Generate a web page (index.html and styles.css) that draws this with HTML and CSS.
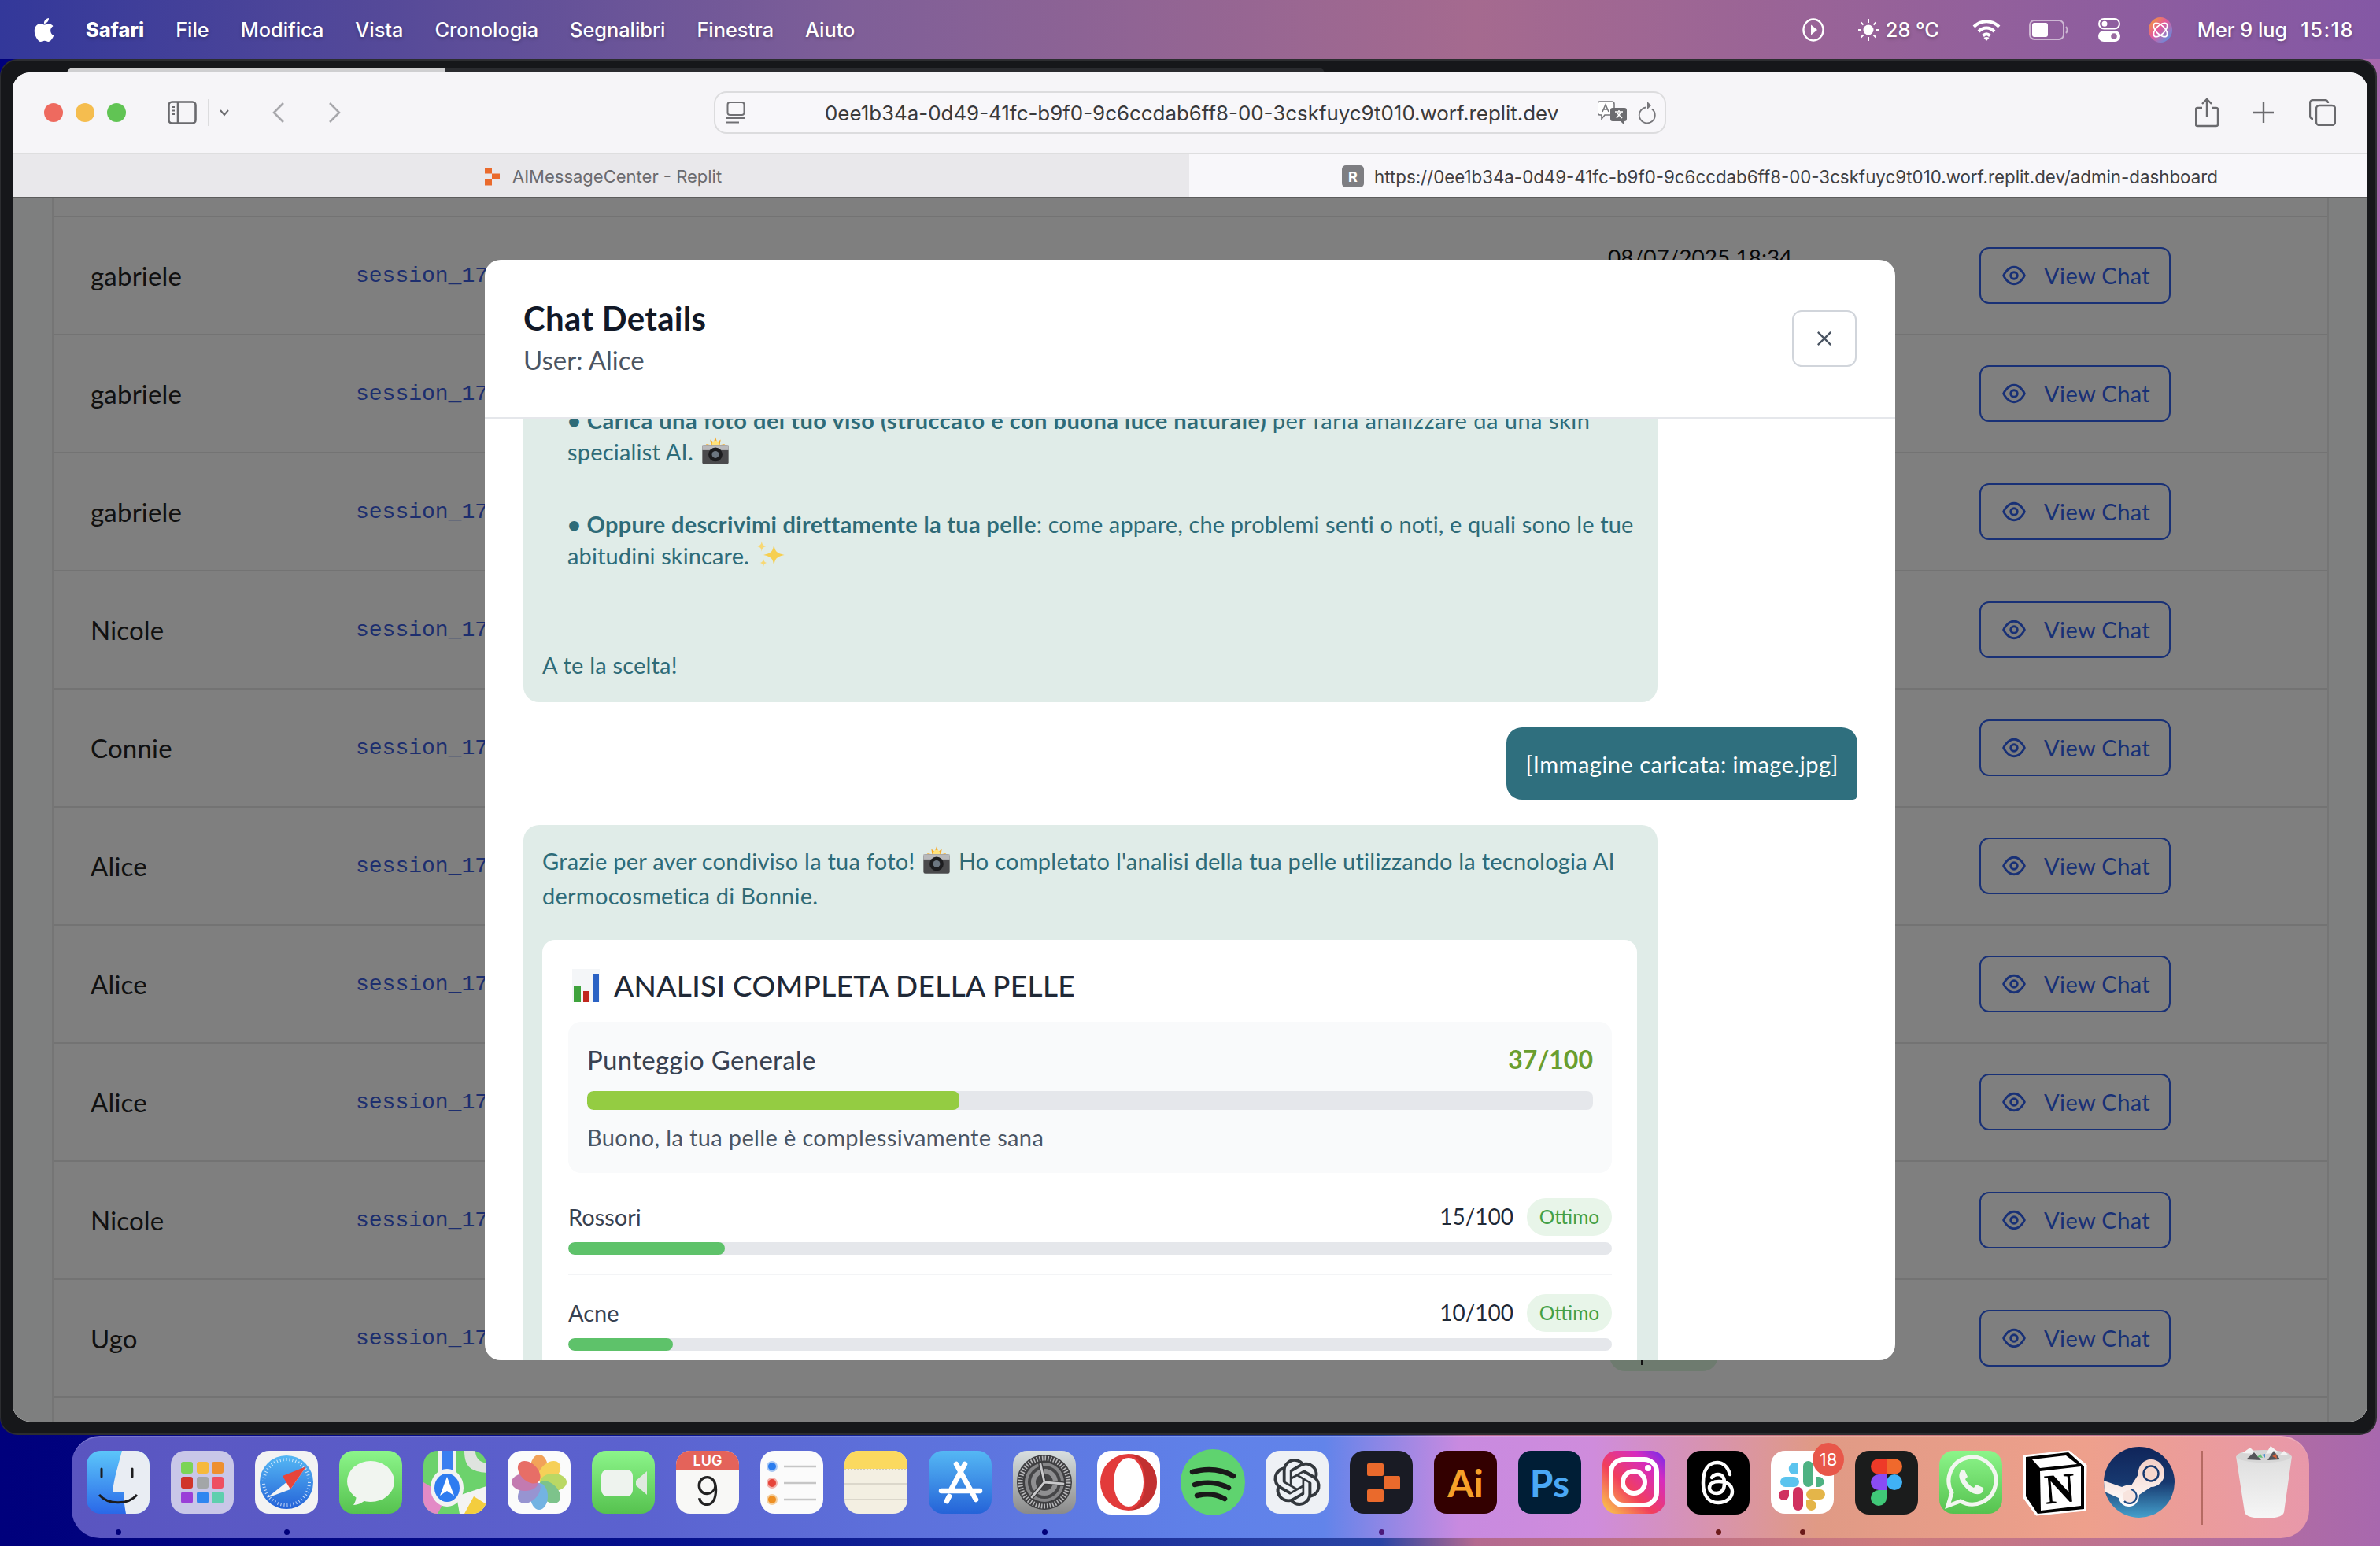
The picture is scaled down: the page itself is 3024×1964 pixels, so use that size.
FILE: index.html
```html
<!DOCTYPE html>
<html lang="it">
<head>
<meta charset="utf-8">
<title>Chat Details</title>
<link rel="stylesheet" href="styles.css">
</head>
<body>
<svg class="sprite" aria-hidden="true">
  <defs>
    <symbol id="replit" viewBox="0 0 24 24"><path d="M3 1h9v7.500H3zM12 8.500h10v7.500H12zM3 16h9v7.500H3z" fill="currentColor"/></symbol>
    <symbol id="eye" viewBox="0 0 24 24"><path d="M2 12s3.500-8 10-8 10 8 10 8-3.500 8-10 8-10-8-10-8Z" fill="none" stroke="currentColor" stroke-width="2.200"/><circle cx="12" cy="12" r="3.200" fill="none" stroke="currentColor" stroke-width="2.200"/></symbol>
    <symbol id="cam" viewBox="0 0 36 32"><path d="M18 0l2 6 4-3-1 6 6-1-4 4h-14l-4-4 6 1-1-6 4 3z" fill="#f6a623"/><circle cx="18" cy="8" r="4" fill="#ffe27a"/><rect x="3" y="9" width="30" height="22" rx="2" fill="#4a4a4c"/><rect x="3" y="9" width="30" height="6" fill="#b9b9bb"/><circle cx="18" cy="20" r="8" fill="#1d1d1f"/><circle cx="18" cy="20" r="4" fill="#6c7680"/></symbol>
    <symbol id="spark" viewBox="0 0 36 32"><path d="M21 3c1 9 3 11 12 13-9 2-11 4-12 13-1-9-3-11-12-13 9-2 11-4 12-13z" fill="#f6cf50"/><path d="M7 0c.5 4 1.500 5 5 6-3.500 1-4.500 2-5 6-.5-4-1.500-5-5-6 3.500-1 4.500-2 5-6zM9 20c.4 3 1 4 4 5-3 .8-3.600 2-4 5-.4-3-1-4.200-4-5 3-1 3.600-2 4-5z" fill="#f8d873"/></symbol>
    <symbol id="chart" viewBox="0 0 35 42"><rect width="35" height="42" fill="#f4f6f8"/><rect x="2" y="22" width="9" height="20" fill="#3fa33d"/><rect x="14" y="28" width="8" height="14" fill="#c0281f"/><rect x="26" y="6" width="8" height="36" fill="#2a62c4"/></symbol>
    <linearGradient id="gFinder" x1="0" y1="0" x2="0" y2="1"><stop offset="0" stop-color="#5cc6fa"/><stop offset="1" stop-color="#2a68e8"/></linearGradient>
    <linearGradient id="gGreen" x1="0" y1="0" x2="0" y2="1"><stop offset="0" stop-color="#8cf58a"/><stop offset="1" stop-color="#56c24f"/></linearGradient>
    <linearGradient id="gBlue" x1="0" y1="0" x2="0" y2="1"><stop offset="0" stop-color="#55b8f4"/><stop offset="1" stop-color="#2563d8"/></linearGradient>
    <linearGradient id="gGrey" x1="0" y1="0" x2="0" y2="1"><stop offset="0" stop-color="#d8dfe0"/><stop offset="1" stop-color="#8a8a8a"/></linearGradient>
    <linearGradient id="gInsta" x1="0" y1="1" x2="1" y2="0"><stop offset="0" stop-color="#fbd24a"/><stop offset=".4" stop-color="#f23f5c"/><stop offset=".75" stop-color="#d62bc0"/><stop offset="1" stop-color="#6a2cf0"/></linearGradient>
    <linearGradient id="gSteam" x1="0" y1="0" x2="0" y2="1"><stop offset="0" stop-color="#10255a"/><stop offset=".5" stop-color="#17386f"/><stop offset="1" stop-color="#45a0cc"/></linearGradient>
    <linearGradient id="gArm" x1="0" y1="0" x2="0" y2="1"><stop offset="0" stop-color="#f3cfc6"/><stop offset="1" stop-color="#ffffff"/></linearGradient>
    <linearGradient id="gGlass" x1="0" y1="0" x2="0" y2="1"><stop offset="0" stop-color="#dedede"/><stop offset="1" stop-color="#f6f6f6"/></linearGradient>
    <linearGradient id="gSiri" x1="0" y1="0" x2="1" y2="1"><stop offset="0" stop-color="#f5a524"/><stop offset=".45" stop-color="#e35a9c"/><stop offset="1" stop-color="#3d9cf0"/></linearGradient>
  </defs>
</svg>

<header class="menubar">
  <div class="menu-left">
    <svg class="apple" viewBox="0 0 24 24"><path fill="#fff" d="M12.152 6.896c-.948 0-2.415-1.078-3.960-1.040-2.040.027-3.910 1.183-4.961 3.014-2.117 3.675-.546 9.103 1.519 12.090 1.013 1.454 2.208 3.090 3.792 3.039 1.520-.065 2.090-.987 3.935-.987 1.831 0 2.350.987 3.960.948 1.637-.026 2.676-1.480 3.676-2.948 1.156-1.688 1.636-3.325 1.662-3.415-.039-.013-3.182-1.221-3.220-4.857-.026-3.040 2.480-4.494 2.597-4.559-1.429-2.090-3.623-2.324-4.390-2.376-2-.156-3.675 1.090-4.610 1.090zM15.530 3.830c.843-1.012 1.400-2.427 1.245-3.830-1.207.052-2.662.805-3.532 1.818-.780.896-1.454 2.338-1.273 3.714 1.338.104 2.715-.688 3.559-1.701"/></svg>
    <span class="menu-app">Safari</span><span>File</span><span>Modifica</span><span>Vista</span><span>Cronologia</span><span>Segnalibri</span><span>Finestra</span><span>Aiuto</span>
  </div>
  <div class="menu-right">
    <svg class="st st-play" viewBox="0 0 28 30"><ellipse cx="14" cy="15" rx="12.500" ry="13.500" fill="none" stroke="#fff" stroke-width="2.400"/><path d="M11 8.500l8 6.500-8 6.500z" fill="#fff"/></svg>
    <svg class="st st-sun" viewBox="0 0 28 30"><circle cx="14" cy="15" r="6.500" fill="#fff"/><path d="M14 1v5M14 24v5M1 15h4M23 15h4M4.500 5.500l3 3M20.500 21.500l3 3M4.500 24.500l3-3M20.500 8.500l3-3" stroke="#fff" stroke-width="2" fill="none"/></svg>
    <span class="st-temp">28 °C</span>
    <svg class="st st-wifi" viewBox="0 0 36 28"><path d="M2 10c9-9 23-9 32 0M8 16c6-6 14-6 20 0M13.500 21.500c3-3 6-3 9 0" fill="none" stroke="#fff" stroke-width="4"/><path d="M18 28l-3.500-4c2-1.500 5-1.500 7 0z" fill="#fff"/></svg>
    <svg class="st st-batt" viewBox="0 0 50 26"><rect x="1" y="1" width="43" height="24" rx="6" fill="none" stroke="#fff" stroke-opacity=".55" stroke-width="2"/><rect x="4" y="4" width="20" height="18" rx="3" fill="#fff"/><path d="M47 9c2 2 2 6 0 8" stroke="#fff" stroke-opacity=".55" stroke-width="2" fill="none"/></svg>
    <svg class="st st-ctl" viewBox="0 0 28 30"><rect x="1" y="1" width="26" height="12.500" rx="6.250" fill="none" stroke="#fff" stroke-width="2"/><circle cx="8" cy="7.200" r="3.500" fill="#fff"/><rect x="0" y="16" width="28" height="14" rx="7" fill="#fff"/><circle cx="20" cy="23" r="3.800" fill="#9a6aa0"/></svg>
    <svg class="st st-siri" viewBox="0 0 30 32"><ellipse cx="15" cy="16" rx="15" ry="16" fill="url(#gSiri)"/><ellipse cx="15" cy="16" rx="11" ry="5.500" transform="rotate(-45 15 16)" fill="none" stroke="#fff" stroke-width="1.800"/><ellipse cx="15" cy="16" rx="11" ry="5.500" transform="rotate(45 15 16)" fill="none" stroke="#fff" stroke-width="1.800"/></svg>
    <span class="st-date">Mer 9 lug</span><span class="st-time">15:18</span>
  </div>
</header>

<div class="back-sliver"></div>

<div class="shell">
  <main class="safari">
    <div class="toolbar">
      <div class="lights"><i class="l-red"></i><i class="l-yel"></i><i class="l-grn"></i></div>
      <svg class="tb-side" viewBox="0 0 37 30"><rect x="1.500" y="1.500" width="34" height="27" rx="4" fill="none" stroke="#6a6a6e" stroke-width="2.600"/><path d="M13 2v26" stroke="#6a6a6e" stroke-width="2.600"/><path d="M5 8h4M5 12.500h4M5 17h4" stroke="#6a6a6e" stroke-width="2"/></svg>
      <span class="tb-div"></span>
      <svg class="tb-chev" viewBox="0 0 14 10"><path d="M2 2l5 6 5-6" fill="none" stroke="#6a6a6e" stroke-width="2"/></svg>
      <svg class="tb-arrow" viewBox="0 0 18 28"><path d="M15 2L3 14l12 12" fill="none" stroke="#a8a8ac" stroke-width="2.600"/></svg>
      <svg class="tb-arrow tb-fwd" viewBox="0 0 18 28"><path d="M3 2l12 12L3 26" fill="none" stroke="#a8a8ac" stroke-width="2.600"/></svg>
      <div class="urlbar">
        <svg class="url-page" viewBox="0 0 24 28"><rect x="1.500" y="1" width="21" height="16" rx="3" fill="none" stroke="#707074" stroke-width="2"/><path d="M0 21h24M0 26.500h16" stroke="#707074" stroke-width="2"/></svg>
        <span class="url-text">0ee1b34a-0d49-41fc-b9f0-9c6ccdab6ff8-00-3cskfuyc9t010.worf.replit.dev</span>
        <svg class="url-tr" viewBox="0 0 38 30"><path d="M3 1h15a3 3 0 0 1 3 3v11a3 3 0 0 1-3 3H9l-4 5v-5H3a3 3 0 0 1-3-3V4a3 3 0 0 1 3-3z" fill="#fff" stroke="#77777b" stroke-width="1.600"/><path d="M6 14l4-9 4 9M7.500 11h5" fill="none" stroke="#77777b" stroke-width="1.600"/><path d="M19 9h15a3 3 0 0 1 3 3v11a3 3 0 0 1-3 3h-1v4l-4-4h-10a3 3 0 0 1-3-3V12a3 3 0 0 1 3-3z" fill="#6c6c70"/><path d="M22 14h10M27 12v2M24 22l6-8M24 15l7 7" stroke="#fff" stroke-width="1.500" fill="none"/></svg>
        <svg class="url-re" viewBox="0 0 24 30"><path d="M18 8.500A10 10 0 1 1 10 6.500" fill="none" stroke="#77777b" stroke-width="1.800" transform="translate(0 2)"/><path d="M12 1v10l5-5z" fill="#77777b"/></svg>
      </div>
      <div class="tb-right">
        <svg class="tb-share" viewBox="0 0 30 38"><path d="M9 13H3a2 2 0 0 0-2 2v19a2 2 0 0 0 2 2h24a2 2 0 0 0 2-2V15a2 2 0 0 0-2-2h-6" fill="none" stroke="#6a6a6e" stroke-width="2.400"/><path d="M15 25V2M9 8l6-6 6 6" fill="none" stroke="#6a6a6e" stroke-width="2.400"/></svg>
        <svg class="tb-plus" viewBox="0 0 28 28"><path d="M14 1v26M1 14h26" stroke="#6a6a6e" stroke-width="2.400"/></svg>
        <svg class="tb-tabs" viewBox="0 0 34 34"><path d="M5 25a4 4 0 0 1-4-4V5a4 4 0 0 1 4-4h15a4 4 0 0 1 4 4" fill="none" stroke="#6a6a6e" stroke-width="2.400"/><rect x="9" y="8" width="24" height="25" rx="4" fill="none" stroke="#6a6a6e" stroke-width="2.400"/></svg>
      </div>
    </div>
    <div class="tabbar">
      <div class="tab tab-off"><svg class="tab-logo"><use href="#replit"/></svg><span>AIMessageCenter - Replit</span></div>
      <div class="tab tab-on"><span class="fav">R</span><span>https://0ee1b34a-0d49-41fc-b9f0-9c6ccdab6ff8-00-3cskfuyc9t010.worf.replit.dev/admin-dashboard</span></div>
    </div>
    <div class="page">
      <div class="table">
        <div class="row-cut"></div>
        <div class="row"><span class="name">gabriele</span><code class="sess">session_17</code><span class="date">08/07/2025 18:34</span><button class="view"><svg class="eye"><use href="#eye"/></svg><span class="view-t">View Chat</span></button></div>
        <div class="row"><span class="name">gabriele</span><code class="sess">session_17</code><span></span><button class="view"><svg class="eye"><use href="#eye"/></svg><span class="view-t">View Chat</span></button></div>
        <div class="row"><span class="name">gabriele</span><code class="sess">session_17</code><span></span><button class="view"><svg class="eye"><use href="#eye"/></svg><span class="view-t">View Chat</span></button></div>
        <div class="row"><span class="name">Nicole</span><code class="sess">session_17</code><span></span><button class="view"><svg class="eye"><use href="#eye"/></svg><span class="view-t">View Chat</span></button></div>
        <div class="row"><span class="name">Connie</span><code class="sess">session_17</code><span></span><button class="view"><svg class="eye"><use href="#eye"/></svg><span class="view-t">View Chat</span></button></div>
        <div class="row"><span class="name">Alice</span><code class="sess">session_17</code><span></span><button class="view"><svg class="eye"><use href="#eye"/></svg><span class="view-t">View Chat</span></button></div>
        <div class="row"><span class="name">Alice</span><code class="sess">session_17</code><span></span><button class="view"><svg class="eye"><use href="#eye"/></svg><span class="view-t">View Chat</span></button></div>
        <div class="row"><span class="name">Alice</span><code class="sess">session_17</code><span></span><button class="view"><svg class="eye"><use href="#eye"/></svg><span class="view-t">View Chat</span></button></div>
        <div class="row"><span class="name">Nicole</span><code class="sess">session_17</code><span></span><button class="view"><svg class="eye"><use href="#eye"/></svg><span class="view-t">View Chat</span></button></div>
        <div class="row"><span class="name">Ugo</span><code class="sess">session_17</code><span class="pill-under"></span><button class="view"><svg class="eye"><use href="#eye"/></svg><span class="view-t">View Chat</span></button></div>
      </div>
      <div class="overlay">
        <section class="modal">
          <div class="m-head">
            <div>
              <h2 class="m-title">Chat Details</h2>
              <p class="m-sub">User: Alice</p>
            </div>
            <button class="m-close"><svg viewBox="0 0 24 24"><path d="M5 5l14 14M19 5L5 19" stroke="currentColor" stroke-width="2" fill="none"/></svg></button>
          </div>
          <div class="m-body">
            <div class="bubble b-first">
              <p class="bul bul1"><b>• Carica una foto del tuo viso (struccato e con buona luce naturale)</b> <span class="wide">per farla analizzare da una skin</span><br>specialist AI. <svg class="emo"><use href="#cam"/></svg></p>
              <p class="bul bul2"><b>• Oppure descrivimi direttamente la tua pelle</b>: come appare, che problemi senti o noti, e quali sono le tue<br>abitudini skincare. <svg class="emo"><use href="#spark"/></svg></p>
              <p class="close-line">A te la scelta!</p>
            </div>
            <div class="user-row"><div class="bubble-user">[Immagine caricata: image.jpg]</div></div>
            <div class="bubble b-second">
              <p class="intro">Grazie per aver condiviso la tua foto! <svg class="emo"><use href="#cam"/></svg> Ho completato l'analisi della tua pelle utilizzando la tecnologia AI<br>dermocosmetica di Bonnie.</p>
              <div class="card">
                <h3 class="card-h"><svg class="emo-chart"><use href="#chart"/></svg>ANALISI COMPLETA DELLA PELLE</h3>
                <div class="score">
                  <div class="score-top"><span>Punteggio Generale</span><b>37/100</b></div>
                  <div class="track t-big"><div class="fill f-lime" style="width:37%"></div></div>
                  <p class="score-desc">Buono, la tua pelle è complessivamente sana</p>
                </div>
                <div class="metric">
                  <div class="m-top"><span class="m-name">Rossori</span><span class="m-val">15/100</span><span class="m-tag">Ottimo</span></div>
                  <div class="track"><div class="fill f-green" style="width:15%"></div></div>
                </div>
                <div class="metric">
                  <div class="m-top"><span class="m-name">Acne</span><span class="m-val">10/100</span><span class="m-tag">Ottimo</span></div>
                  <div class="track"><div class="fill f-green" style="width:10%"></div></div>
                </div>
              </div>
            </div>
          </div>
        </section>
      </div>
    </div>
  </main>
</div>

<footer class="dock">
  <div class="app"><svg viewBox="0 0 80 80"><rect width="80" height="80" rx="18" fill="url(#gFinder)"/><path d="M45 0h17a18 18 0 0 1 18 18v44a18 18 0 0 1-18 18H50c-2-10-3-20-3-28H33c2-18 8-36 12-52z" fill="#e9edf3"/><path d="M19 23v10M58 23v10" stroke="#1c1c1e" stroke-width="3" stroke-linecap="round"/><path d="M16 56c11 13 37 13 48 0" stroke="#1c1c1e" stroke-width="3" fill="none"/></svg><i class="dot d1"></i></div>
  <div class="app"><svg viewBox="0 0 80 80"><rect width="80" height="80" rx="18" fill="#c9c7e8"/><rect x="13" y="14" width="15" height="15" rx="3" fill="#7bd455"/><rect x="33" y="14" width="15" height="15" rx="3" fill="#f6b93b"/><rect x="52" y="14" width="15" height="15" rx="3" fill="#ee8f2f"/><rect x="13" y="33" width="15" height="15" rx="3" fill="#d0352b"/><rect x="33" y="33" width="15" height="15" rx="3" fill="#a3a6a8"/><rect x="52" y="33" width="15" height="15" rx="3" fill="#ee4f62"/><rect x="13" y="52" width="15" height="15" rx="3" fill="#9a3fd8"/><rect x="33" y="52" width="15" height="15" rx="3" fill="#2f86f0"/><rect x="52" y="52" width="15" height="15" rx="3" fill="#5ecfae"/></svg><i class="dot off"></i></div>
  <div class="app"><svg viewBox="0 0 80 80"><rect width="80" height="80" rx="18" fill="#f3f3f3"/><circle cx="40" cy="40" r="34" fill="url(#gBlue)"/><circle cx="40" cy="40" r="29" fill="none" stroke="#fff" stroke-opacity=".75" stroke-width="4" stroke-dasharray="1 3"/><path d="M15 60l50-40-20 29z" fill="#f4f4f4"/><path d="M65 20L35 32l10 17z" fill="#e7453b"/></svg><i class="dot d1"></i></div>
  <div class="app"><svg viewBox="0 0 80 80"><rect width="80" height="80" rx="18" fill="url(#gGreen)"/><ellipse cx="40" cy="39" rx="30" ry="26" fill="#f1f5f0"/><path d="M22 55c0 6-2 11-4 14 7 0 13-4 17-8z" fill="#f1f5f0"/></svg><i class="dot off"></i></div>
  <div class="app"><svg viewBox="0 0 80 80"><defs><clipPath id="cMaps"><rect width="80" height="80" rx="18"/></clipPath></defs><g clip-path="url(#cMaps)"><rect width="80" height="80" fill="#6cd26c"/><path d="M0 40l30 18-12 22H0z" fill="#e38ac6"/><path d="M80 45v35H46l-4-22z" fill="#f3f3f3"/><path d="M52 80l12-22 16 10v12z" fill="#f3cd3e"/><path d="M18 0h24v55H18z" fill="#f2f2f2"/><path d="M23 0h14v50H23z" fill="#3a7ff0"/><path d="M52 0c0 22 10 26 28 28V16c-10-2-14-8-14-16z" fill="#dfe3df"/><ellipse cx="30" cy="47" rx="21" ry="24" fill="#f2f2f2"/><ellipse cx="30" cy="47" rx="16" ry="18" fill="#2e7cf0"/><path d="M30 33l9 24-9-6-9 6z" fill="#fff"/></g></svg><i class="dot off"></i></div>
  <div class="app"><svg viewBox="0 0 80 80"><rect width="80" height="80" rx="18" fill="#fbfbfb"/><g opacity=".78"><ellipse cx="40" cy="22" rx="11" ry="17" fill="#f08a2c"/><ellipse cx="40" cy="22" rx="11" ry="17" fill="#f5c52b" transform="rotate(45 40 40)"/><ellipse cx="40" cy="22" rx="11" ry="17" fill="#a9cf3a" transform="rotate(90 40 40)"/><ellipse cx="40" cy="22" rx="11" ry="17" fill="#5ab46c" transform="rotate(135 40 40)"/><ellipse cx="40" cy="22" rx="11" ry="17" fill="#4e9fdc" transform="rotate(180 40 40)"/><ellipse cx="40" cy="22" rx="11" ry="17" fill="#7b78c6" transform="rotate(225 40 40)"/><ellipse cx="40" cy="22" rx="11" ry="17" fill="#b4569c" transform="rotate(270 40 40)"/><ellipse cx="40" cy="22" rx="11" ry="17" fill="#e2473e" transform="rotate(315 40 40)"/></g></svg><i class="dot off"></i></div>
  <div class="app"><svg viewBox="0 0 80 80"><rect width="80" height="80" rx="18" fill="url(#gGreen)"/><rect x="12" y="24" width="40" height="34" rx="8" fill="#eef3ee"/><path d="M56 38l14-12v30L56 44z" fill="#dfe9df"/></svg><i class="dot off"></i></div>
  <div class="app"><svg viewBox="0 0 80 80"><rect width="80" height="80" rx="18" fill="#f8f8f6"/><path d="M0 25V18A18 18 0 0 1 18 0h44a18 18 0 0 1 18 18v7z" fill="#e4635a"/><text x="40" y="19" class="cal-m">LUG</text><text x="40" y="70" class="cal-d">9</text></svg><i class="dot off"></i></div>
  <div class="app"><svg viewBox="0 0 80 80"><rect width="80" height="80" rx="18" fill="#fbfbfb"/><circle cx="15" cy="20" r="6" fill="#2a7cee" stroke="#a9c8f4" stroke-width="2"/><circle cx="15" cy="41" r="6" fill="#e6443a" stroke="#f2b0aa" stroke-width="2"/><circle cx="15" cy="62" r="6" fill="#ee9024" stroke="#f4cf9f" stroke-width="2"/><path d="M30 20h41M30 41h41M30 62h41" stroke="#c6c6c6" stroke-width="2.500"/></svg><i class="dot off"></i></div>
  <div class="app"><svg viewBox="0 0 80 80"><defs><clipPath id="cNotes"><rect width="80" height="80" rx="18"/></clipPath></defs><g clip-path="url(#cNotes)"><rect width="80" height="80" fill="#f3efe2"/><rect width="80" height="23" fill="#fbd95f"/><path d="M0 24h80" stroke="#cfcab8" stroke-width="2" stroke-dasharray="2 2"/><path d="M0 42h80M0 62h80" stroke="#dbd7cb" stroke-width="2"/></g></svg><i class="dot off"></i></div>
  <div class="app"><svg viewBox="0 0 80 80"><rect width="80" height="80" rx="18" fill="url(#gBlue)"/><path d="M46 17L29 48M35 17l25 45M16 51h49M26 58l-3 6" stroke="#fff" stroke-width="6.500" stroke-linecap="round" fill="none"/></svg><i class="dot off"></i></div>
  <div class="app"><svg viewBox="0 0 80 80"><rect width="80" height="80" rx="18" fill="url(#gGrey)"/><circle cx="40" cy="40" r="35" fill="#3e3e40"/><circle cx="40" cy="40" r="30.500" fill="none" stroke="#b8b8ba" stroke-width="6" stroke-dasharray="1.600 2"/><circle cx="40" cy="40" r="25" fill="#858587"/><circle cx="40" cy="40" r="21" fill="#454547"/><circle cx="40" cy="40" r="14" fill="none" stroke="#8f8f91" stroke-width="6"/><path d="M40 40l-5-23M40 40l24 2M40 40L24 59" stroke="#3a3a3c" stroke-width="5.500" stroke-linecap="round"/><path d="M40 40l-5-23M40 40l24 2M40 40L24 59" stroke="#c9c9cb" stroke-width="2.800" stroke-linecap="round"/></svg><i class="dot d1"></i></div>
  <div class="app"><svg viewBox="0 0 80 80"><rect width="80" height="81" rx="18" fill="#fff"/><ellipse cx="40" cy="40" rx="36" ry="36" fill="#e23b3b"/><ellipse cx="40" cy="40" rx="19" ry="31" fill="#fff"/><path d="M40 4a36 36 0 0 1 0 72c12-2 21-17 21-36S52 6 40 4z" fill="#ad2a2a" opacity=".6"/></svg><i class="dot off"></i></div>
  <div class="app"><svg viewBox="0 0 80 80"><ellipse cx="40" cy="40" rx="41" ry="42" fill="#5fd36f"/><path d="M14 27c18-5 36-4 52 5M17 43c14-4 30-3 43 4M20 57c12-3 24-2 35 4" stroke="#191919" stroke-width="6.500" stroke-linecap="round" fill="none"/></svg><i class="dot off"></i></div>
  <div class="app"><svg viewBox="0 0 80 80"><rect width="80" height="80" rx="18" fill="#eef1f5"/><path transform="translate(10 10) scale(2.500)" fill="#33383d" d="M22.2819 9.8211a5.9847 5.9847 0 0 0-.5157-4.9108 6.0462 6.0462 0 0 0-6.5098-2.9A6.0651 6.0651 0 0 0 4.9807 4.1818a5.9847 5.9847 0 0 0-3.9977 2.9 6.0462 6.0462 0 0 0 .7427 7.0966 5.98 5.98 0 0 0 .511 4.9107 6.051 6.051 0 0 0 6.5146 2.9001A5.9847 5.9847 0 0 0 13.2599 24a6.0557 6.0557 0 0 0 5.7718-4.2058 5.9894 5.9894 0 0 0 3.9977-2.9001 6.0557 6.0557 0 0 0-.7475-7.0729zm-9.022 12.6081a4.4755 4.4755 0 0 1-2.8764-1.0408l.1419-.0804 4.7783-2.7582a.7948.7948 0 0 0 .3927-.6813v-6.7369l2.02 1.1686a.071.071 0 0 1 .038.052v5.5826a4.504 4.504 0 0 1-4.4945 4.4944zm-9.6607-4.1254a4.4708 4.4708 0 0 1-.5346-3.0137l.142.0852 4.783 2.7582a.7712.7712 0 0 0 .7806 0l5.8428-3.3685v2.3324a.0804.0804 0 0 1-.0332.0615L9.74 19.9502a4.4992 4.4992 0 0 1-6.1408-1.6464zM2.3408 7.8956a4.485 4.485 0 0 1 2.3655-1.9728V11.6a.7664.7664 0 0 0 .3879.6765l5.8144 3.3543-2.0201 1.1685a.0757.0757 0 0 1-.071 0l-4.8303-2.7865A4.504 4.504 0 0 1 2.3408 7.872zm16.5963 3.8558L13.1038 8.364 15.1192 7.2a.0757.0757 0 0 1 .071 0l4.8303 2.7913a4.4944 4.4944 0 0 1-.6765 8.1042v-5.6772a.79.79 0 0 0-.407-.667zm2.0107-3.0231l-.142-.0852-4.7735-2.7818a.7759.7759 0 0 0-.7854 0L9.409 9.2297V6.8974a.0662.0662 0 0 1 .0284-.0615l4.8303-2.7866a4.4992 4.4992 0 0 1 6.6802 4.66zM8.3065 12.863l-2.02-1.1638a.0804.0804 0 0 1-.038-.0567V6.0742a4.4992 4.4992 0 0 1 7.3757-3.4537l-.142.0805L8.704 5.459a.7948.7948 0 0 0-.3927.6813zm1.0976-2.3654l2.602-1.4998 2.6069 1.4998v2.9994l-2.5974 1.4997-2.6067-1.4997Z"/></svg><i class="dot off"></i></div>
  <div class="app"><svg viewBox="0 0 80 80"><rect width="80" height="80" rx="18" fill="#191b24"/><rect x="22" y="16" width="21" height="16" rx="2" fill="#ea6a2c"/><rect x="43" y="32" width="21" height="17" rx="2" fill="#ea6a2c"/><rect x="22" y="49" width="21" height="16" rx="2" fill="#ea6a2c"/></svg><i class="dot d2"></i></div>
  <div class="app"><svg viewBox="0 0 80 80"><rect width="80" height="80" rx="16" fill="#330000"/><text x="40" y="59" class="ai">Ai</text></svg><i class="dot off"></i></div>
  <div class="app"><svg viewBox="0 0 80 80"><rect width="80" height="80" rx="16" fill="#001e36"/><text x="40" y="59" class="ps">Ps</text></svg><i class="dot off"></i></div>
  <div class="app"><svg viewBox="0 0 80 80"><rect width="80" height="80" rx="18" fill="url(#gInsta)"/><rect x="11" y="11" width="58" height="58" rx="16" fill="none" stroke="#fff" stroke-width="6"/><circle cx="40" cy="40" r="14" fill="none" stroke="#fff" stroke-width="6"/><circle cx="58" cy="22" r="4" fill="#fff"/></svg><i class="dot off"></i></div>
  <div class="app"><svg viewBox="0 0 80 80"><rect width="80" height="81" rx="18" fill="#000"/><path d="M55 30C52 19 45 15 39 15 27 15 21 25 21 41c0 16 7 25 19 25 10 0 18-6 18-14 0-9-8-13-17-13-7 0-12 3-12 8 0 5 5 7 9 7 7 0 10-5 10-13 0-7-3-11-8-11-3 0-6 1-8 4" fill="none" stroke="#fff" stroke-width="4.500" stroke-linecap="round"/></svg><i class="dot d3"></i></div>
  <div class="app"><svg viewBox="0 0 80 80"><rect width="80" height="80" rx="18" fill="#fff"/><path d="M34 18v14h-7a7 7 0 1 1 7-14z" fill="#5bc4ee" transform="translate(0 -2)"/><rect x="12" y="33" width="24" height="13" rx="6.500" fill="#5bc4ee"/><rect x="41" y="13" width="13" height="33" rx="6.500" fill="#4eb283"/><path d="M57 33h4a6.500 6.500 0 1 1 0 13h-4z" fill="#4eb283"/><path d="M23 50v7a6.500 6.500 0 1 1-6.500-7z" fill="#d0315f"/><rect x="28" y="46" width="13" height="30" rx="6.500" fill="#d0315f"/><rect x="45" y="49" width="24" height="13" rx="6.500" fill="#e4b549"/><path d="M45 63h7a6.500 6.500 0 1 1-7 6.500z" fill="#e4b549"/></svg><i class="dot d3"></i><span class="badge">18</span></div>
  <div class="app"><svg viewBox="0 0 80 80"><rect width="80" height="81" rx="18" fill="#1b1c1c"/><path d="M40 10H30a10 10 0 0 0 0 20h10z" fill="#ee3a28"/><path d="M40 10h10a10 10 0 0 1 0 20H40z" fill="#f0692c"/><path d="M40 30H30a10 10 0 0 0 0 20h10z" fill="#8a4cf4"/><circle cx="50" cy="40" r="10" fill="#40b2f6"/><path d="M30 50h10v10a10 10 0 1 1-10-10z" fill="#40c878"/></svg><i class="dot off"></i></div>
  <div class="app"><svg viewBox="0 0 80 80"><rect width="80" height="80" rx="18" fill="url(#gGreen)"/><path d="M11 70l5-17a30 30 0 1 1 11 11z" fill="none" stroke="#f2f6f0" stroke-width="5"/><path d="M29 24c-5 4-5 11 1 19 7 9 14 13 21 12 4-1 6-5 5-8l-9-4-3 4c-5-2-9-7-11-11l3-3-4-9z" fill="#f2f6f0"/></svg><i class="dot off"></i></div>
  <div class="app"><svg viewBox="0 0 80 80"><path d="M0 6L58 0l22 18-1 58-63 6L0 60z" fill="#fff" stroke="#fff" stroke-linejoin="round" stroke-width="1"/><path d="M3 8L57 2l20 18v54l-59 6L3 58z" fill="#000"/><path d="M11 11l43-5 14 11-47 5z" fill="#fff"/><path d="M21 26l52-6v50l-51 6z" fill="#fff"/><text x="46" y="66" class="notion" transform="rotate(-5 46 47)">N</text></svg><i class="dot off"></i></div>
  <div class="app"><svg viewBox="0 0 80 80"><ellipse cx="40" cy="40" rx="45" ry="45" fill="url(#gSteam)"/><path d="M-5 38L18 46c4-2 8-3 12-2l9-14C38 19 46 11 55 11c10 0 17 8 17 18s-8 17-17 17L40 56c0 9-6 15-13 15s-12-5-13-11L-4 52z" fill="url(#gArm)"/><circle cx="55" cy="29" r="9.500" fill="#f5d6cc" stroke="#173a70" stroke-width="2.400"/><circle cx="27" cy="58" r="8" fill="#f8e4de"/><path d="M29 49a9 9 0 1 1-8 15" fill="none" stroke="#1d4a84" stroke-width="2.200"/></svg><i class="dot off"></i></div>
  <span class="dock-sep"></span>
  <div class="app app-trash"><svg viewBox="0 0 70 94"><path d="M0 14l11 71c1 6 13 8 25 8s24-2 25-8l10-71c-16 9-55 9-71 0z" fill="url(#gGlass)"/><ellipse cx="35.500" cy="14" rx="35" ry="8" fill="#d6d6d6"/><path d="M8 10l10-7 8 8zM38 11l6-10 10 8zM56 12l5-5 6 6z" fill="#f2f2f2"/><path d="M13 18l10-9 9 10zM40 19l8-12 8 11z" fill="#55555a"/><path d="M27 15l4-4 3 5z" fill="#66c27a"/><path d="M33 12l4-1 0 5z" fill="#4d8fd0"/><path d="M46 14l5-3 1 6z" fill="#d2603a"/></svg></div>
</footer>
</body>
</html>
```
FILE: styles.css
```css
* { box-sizing: border-box; }
html, body { margin: 0; padding: 0; }
body {
  width: 3024px; height: 1964px; overflow: hidden; position: relative;
  font-family: "Lato", "Open Sans", sans-serif;
  background: linear-gradient(90deg, #00007c 0%, #05108c 28%, #2a44a4 58%, #b46a90 62%, #cc7a7c 80%, #a868ae 100%);
}
.sprite { position: absolute; width: 0; height: 0; }

.menubar {
  height: 75px; display: flex; justify-content: space-between; align-items: center;
  padding: 0 33px 0 41px; color: #fff;
  font-family: "Inter", sans-serif; font-size: 25.300px; font-weight: 500;
  text-shadow: 0 2px 4px rgba(0,0,0,.25);
  background: linear-gradient(90deg, #33389a 0%, #7f5f98 36%, #a56a8f 62%, #8458a5 100%);
}
.menu-left { display: flex; align-items: center; gap: 40px; }
.menu-left .apple { width: 30px; height: 32px; margin-right: -2px; }
.menu-app { font-weight: 800; }
.menu-right { display: flex; align-items: center; }
.st { display: block; }
.st-play { width: 28px; height: 30px; }
.st-sun { width: 28px; height: 30px; margin-left: 42px; }
.st-temp { margin-left: 8px; }
.st-wifi { width: 36px; height: 28px; margin-left: 42px; }
.st-batt { width: 50px; height: 26px; margin-left: 36px; }
.st-ctl { width: 28px; height: 30px; margin-left: 38px; }
.st-siri { width: 30px; height: 32px; margin-left: 36px; }
.st-date { margin-left: 32px; }
.st-time { margin-left: 17px; letter-spacing: 1.500px; }

.back-sliver {
  position: absolute; left: 85px; top: 86px; width: 1598px; height: 10px; z-index: 2;
  border-radius: 8px 8px 0 0;
  background: linear-gradient(90deg, #cfcfd1 0, #cfcfd1 480px, #2a2b2f 480px, #2a2b2f 100%);
}
.shell {
  width: 3020px; height: 1748px; padding: 15px 12px 16px 16px; position: relative;
  background: #16171a; border-radius: 22px; border: 2px solid #2c2d30; border-left-width: 1px;
}
.safari {
  position: relative; z-index: 3;
  height: 1714px; margin-left: -1px; width: 2992px; border-radius: 22px; overflow: hidden;
  display: flex; flex-direction: column; background: #fff;
}
.toolbar {
  height: 104px; flex: none; background: #f6f5f8; display: flex; align-items: center;
  padding: 0 0 0 40px; position: relative; border-bottom: 2px solid #dededf;
}
.lights { display: flex; gap: 16px; }
.lights i { display: block; width: 24px; height: 24px; border-radius: 50%; }
.l-red { background: #ee6a5f; }
.l-yel { background: #f5bd4f; }
.l-grn { background: #61c454; }
.tb-side { width: 37px; height: 30px; margin-left: 53px; }
.tb-div { width: 1px; height: 34px; background: #dcdcde; margin-left: 14px; }
.tb-chev { width: 14px; height: 10px; margin-left: 13px; }
.tb-arrow { width: 18px; height: 28px; margin-left: 53px; }
.tb-fwd { margin-left: 53px; }
.urlbar {
  width: 1210px; height: 54px; margin-left: 473px; border: 2px solid #dcdcde; border-radius: 16px;
  background: #f8f7fa; display: flex; align-items: center; padding: 0 10px 0 14px;
}
.url-page { width: 24px; height: 28px; flex: none; }
.url-text { margin-left: 101px; font-family: "Inter", sans-serif; font-size: 25.900px; color: #3a3a3c; white-space: nowrap; }
.url-tr { width: 38px; height: 30px; flex: none; margin-left: auto; }
.url-re { width: 24px; height: 30px; flex: none; margin-left: 13px; }
.tb-right { display: flex; align-items: center; margin-left: 672px; }
.tb-share { width: 30px; height: 38px; }
.tb-plus { width: 28px; height: 28px; margin-left: 43px; }
.tb-tabs { width: 34px; height: 34px; margin-left: 44px; }
.tabbar { height: 56px; flex: none; display: flex; font-family: "Inter", sans-serif; font-size: 22px; white-space: nowrap; border-bottom: 2px solid #5c5c5c; }
.tab { display: flex; align-items: center; height: 100%; padding-top: 2px; }
.tab-off { width: 1495px; background: #e9e8eb; color: #6b6b6f; padding-left: 597px; gap: 14px; }
.tab-on { flex: 1; background: #f8f7fa; color: #3f3f43; padding-left: 194px; gap: 13px; font-size: 22.300px; }
.tab-logo { width: 24px; height: 24px; color: #ea6a2c; }
.fav { width: 28px; height: 28px; border-radius: 5px; background: #7e7e82; color: #fff; font-size: 18px; font-weight: 700; display: flex; align-items: center; justify-content: center; }

.page { flex: 1; position: relative; overflow: hidden; background: #fdfffe; }
.table { margin-left: 50px; width: 2893px; height: 100%; border-left: 2px solid #eaeaea; border-right: 2px solid #eaeaea; background: #fff; }
.row-cut { height: 24px; border-bottom: 2px solid #e6e6e6; }
.row {
  height: 150px; border-bottom: 2px solid #e6e6e6; padding-left: 47px;
  display: grid; grid-template-columns: 337px 1591px 472px 243px; align-items: center;
}
.name { font-size: 33px; letter-spacing: .2px; color: #222; }
.sess { font-family: "Liberation Mono", monospace; font-size: 28px; color: #3a5cdc; }
.date { font-size: 28px; color: #111; align-self: start; padding-top: 34px; white-space: nowrap; }
.pill-under { width: 138px; height: 84px; margin-left: 2px; border-radius: 20px; background: #dcf7df; position: relative; }
.pill-under::after { content: ""; position: absolute; left: 40px; top: 68px; width: 2px; height: 8px; background: #222; }
.view {
  height: 72px; width: 243px; padding: 0 0 0 26px; display: flex; align-items: center; gap: 22px;
  background: transparent; border: 2.500px solid #3161ec; border-radius: 12px;
  color: #3161ec; font: 29px "Lato", sans-serif; letter-spacing: .4px; margin: 0;
}
.view-t { margin-bottom: 2px; }
.eye { width: 32px; height: 32px; flex: none; }

.overlay { position: absolute; inset: 0; background: rgba(0,0,0,.5); display: flex; align-items: center; justify-content: center; }
.modal { width: 1792px; height: 1398px; background: #fff; border-radius: 20px; overflow: hidden; display: flex; flex-direction: column; }
.m-head { height: 202px; flex: none; border-bottom: 2px solid #e5e7eb; padding: 50px 49px 0 49px; display: flex; justify-content: space-between; }
.m-title { margin: 0; font-size: 42px; line-height: 48px; letter-spacing: .3px; font-weight: 700; color: #111827; }
.m-sub { margin: 10px 0 0; font-size: 33px; line-height: 38px; color: #4b5563; }
.m-close { width: 82px; height: 72px; margin-top: 14px; border: 2px solid #d1d5db; border-radius: 12px; background: #fff; color: #4b5563; padding: 0; display: flex; align-items: center; justify-content: center; }
.m-close svg { width: 28px; height: 28px; }
.m-body { flex: 1; overflow: hidden; padding: 0 48px 0 49px; }
.bubble { width: 1441px; background: #e0ece8; color: #2e6b78; border-radius: 0 0 20px 20px; font-size: 29px; letter-spacing: .2px; }
.bubble p { margin: 0; white-space: nowrap; }
.b-first { margin-top: -30px; padding: 12px 24px 0; height: 390px; }
.bul { line-height: 40px; margin-left: 32px !important; }
.bul b { font-weight: 700; letter-spacing: .5px; }
.wide { letter-spacing: .5px; }
.bul2 { margin-top: 52px !important; letter-spacing: .12px; }
.bul2 b { letter-spacing: .3px; }
.close-line { line-height: 40px; margin-top: 99px !important; }
.emo { width: 40px; height: 36px; vertical-align: -6px; }
.user-row { display: flex; justify-content: flex-end; margin: 32px 0; }
.bubble-user { height: 92px; padding: 0 24px; background: #2f6f7e; color: #fff; border-radius: 20px 20px 6px 20px; font-size: 29px; letter-spacing: .5px; display: flex; align-items: center; }
.b-second { border-radius: 20px 20px 0 0; padding: 24px 26px 0 24px; }
.intro { line-height: 44px; letter-spacing: .25px; }
.card { margin-top: 34px; background: #fff; border-radius: 16px; padding: 35px 32px 0 33px; letter-spacing: 0; }
.card-h { margin: 0 0 23px; font-size: 37px; line-height: 46px; letter-spacing: .35px; font-weight: 500; color: #1f2937; display: flex; align-items: center; padding-left: 5px; gap: 18px; }
.emo-chart { width: 35px; height: 42px; }
.score { height: 192px; background: #f9fafb; border-radius: 16px; padding: 28px 24px 0; }
.score-top { display: flex; justify-content: space-between; font-size: 33px; line-height: 40px; color: #374151; }
.score-top span { letter-spacing: .3px; }
.score-top b { color: #6a9e2f; font-size: 32px; }
.t-big { height: 24px !important; margin-top: 20px; }
.score-desc { margin: 17px 0 0 !important; font-size: 29px; letter-spacing: .36px; line-height: 36px; color: #4b5563; }
.track { height: 16px; border-radius: 8px; background: #e5e7eb; overflow: hidden; }
.fill { height: 100%; border-radius: 8px; }
.f-lime { background: #94cc42; }
.f-green { background: #5ec26a; }
.metric { margin-top: 32px; padding-bottom: 24px; border-bottom: 2px solid #f3f4f6; }
.metric + .metric { margin-top: 24px; }
.m-top { display: flex; align-items: center; height: 48px; margin-bottom: 8px; font-size: 29px; color: #374151; }
.m-name { flex: 1; margin-bottom: 2px; }
.m-val { color: #1f2937; margin-right: 17px; font-size: 28px; margin-bottom: 2px; }
.m-tag { width: 108px; height: 48px; border-radius: 24px; background: #e8f5e9; color: #43a047; font-size: 24.500px; padding-bottom: 2px; display: flex; align-items: center; justify-content: center; }

.dock {
  position: absolute; left: 91px; top: 1824px; width: 2843px; height: 130px; z-index: 4;
  border-radius: 36px; border-top: 2px solid rgba(255,255,255,.18);
  padding: 17px 0 0 19px; display: flex; gap: 27px; align-items: flex-start;
  background: linear-gradient(90deg, #5a55c0 0%, #5b62cf 25%, #5f80e8 50%, #6284ea 56%, #c88ae0 62%, #cf8cdc 68%, #e09a85 78%, #eea08c 90%, #e898aa 100%);
}
.app { width: 80px; flex: none; display: flex; flex-direction: column; align-items: center; position: relative; }
.app svg { display: block; width: 80px; height: 80px; overflow: visible; }
.dot { width: 7px; height: 7px; border-radius: 50%; margin-top: 20px; }
.d1 { background: #00007a; }
.d2 { background: #4a1a7a; }
.d3 { background: #6b1a1a; }
.off { background: transparent; }
.badge { position: absolute; right: -13px; top: -10px; width: 40px; height: 42px; border-radius: 50%; background: #e8574a; color: #fff; font: 22px "Inter", sans-serif; display: flex; align-items: center; justify-content: center; }
.dock-sep { width: 2px; height: 94px; background: #b56a62; margin: 0 0 0 12px; flex: none; }
.app-trash { margin-left: 15px; width: 70px; }
.app-trash svg { width: 70px; height: 94px; margin-top: -7px; }
.cal-m { font: 600 18px "Inter", sans-serif; fill: #fff; text-anchor: middle; }
.cal-d { font: 300 52px "Inter", sans-serif; fill: #222; text-anchor: middle; }
.ai { font: 700 48px "Lato", sans-serif; fill: #f7a029; text-anchor: middle; }
.ps { font: 700 48px "Lato", sans-serif; fill: #4aa8f5; text-anchor: middle; }
.notion { font: 700 54px "Liberation Serif", serif; fill: #000; text-anchor: middle; }
```
